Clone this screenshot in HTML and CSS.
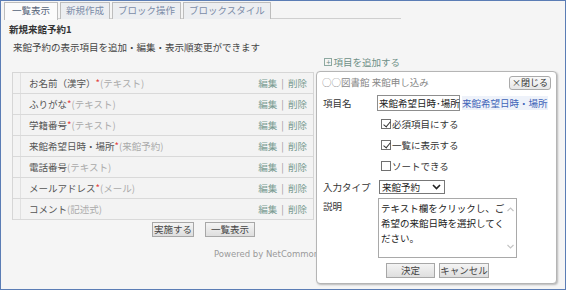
FILE: index.html
```html
<!DOCTYPE html>
<html lang="ja">
<head>
<meta charset="utf-8">
<link rel="stylesheet" href="styles.css">
</head>
<body>
<div class="frame">
  <div class="main">
    <div class="tabs">
      <div class="tab active">一覧表示</div>
      <div class="tab">新規作成</div>
      <div class="tab">ブロック操作</div>
      <div class="tab">ブロックスタイル</div>
    </div>
    <div class="title">新規来館予約1</div>
    <div class="desc">来館予約の表示項目を追加・編集・表示順変更ができます</div>
    <div class="addline"><span class="add"><span class="plus">+</span>項目を追加する</span></div>
    <div class="list">
      <div class="row"><span class="handle"></span><span class="name">お名前（漢字）<span class="req">*</span><span class="type">(テキスト)</span></span><span class="ops">編集 <span class="sep">|</span> 削除</span></div>
      <div class="row"><span class="handle"></span><span class="name">ふりがな<span class="req">*</span><span class="type">(テキスト)</span></span><span class="ops">編集 <span class="sep">|</span> 削除</span></div>
      <div class="row"><span class="handle"></span><span class="name">学籍番号<span class="req">*</span><span class="type">(テキスト)</span></span><span class="ops">編集 <span class="sep">|</span> 削除</span></div>
      <div class="row"><span class="handle"></span><span class="name">来館希望日時・場所<span class="req">*</span><span class="type">(来館予約)</span></span><span class="ops">編集 <span class="sep">|</span> 削除</span></div>
      <div class="row"><span class="handle"></span><span class="name">電話番号<span class="type">(テキスト)</span></span><span class="ops">編集 <span class="sep">|</span> 削除</span></div>
      <div class="row"><span class="handle"></span><span class="name">メールアドレス<span class="req">*</span><span class="type">(メール)</span></span><span class="ops">編集 <span class="sep">|</span> 削除</span></div>
      <div class="row"><span class="handle"></span><span class="name">コメント<span class="type">(記述式)</span></span><span class="ops">編集 <span class="sep">|</span> 削除</span></div>
    </div>
    <div class="actions">
      <button class="btn w42">実施する</button>
      <button class="btn w50">一覧表示</button>
    </div>
    <div class="powered">Powered by NetCommons</div>
  </div>

  <div class="dialog">
    <div class="dhead">
      <span class="dtitle">○○図書館 来館申し込み</span>
      <span class="dots"></span>
      <button class="close">×閉じる</button>
    </div>
    <div class="drow">
      <span class="label">項目名</span>
      <span class="ctrl"><span class="input">来館希望日時･場所</span><span class="preview">来館希望日時・場所</span></span>
    </div>
    <div class="drow">
      <span class="label"></span>
      <span class="ctrl cb"><span class="box checked"></span>必須項目にする</span>
    </div>
    <div class="drow">
      <span class="label"></span>
      <span class="ctrl cb"><span class="box checked"></span>一覧に表示する</span>
    </div>
    <div class="drow">
      <span class="label"></span>
      <span class="ctrl cb"><span class="box"></span>ソートできる</span>
    </div>
    <div class="drow">
      <span class="label">入力タイプ</span>
      <span class="ctrl"><span class="select">来館予約<svg class="chev" width="9" height="6" viewBox="0 0 9 6"><path d="M1 1 L4.5 4.5 L8 1" fill="none" stroke="#222" stroke-width="1.6"/></svg></span></span>
    </div>
    <div class="drow tall">
      <span class="label">説明</span>
      <span class="ctrl"><span class="textarea"><span class="tatext">テキスト欄をクリックし、ご希望の来館日時を選択してください。</span><span class="sb"><svg width="9" height="52" viewBox="0 0 9 52"><path d="M1.5 9 L4.5 6 L7.5 9" fill="none" stroke="#c4c4c4" stroke-width="1.2"/><path d="M1.5 43 L4.5 46 L7.5 43" fill="none" stroke="#c4c4c4" stroke-width="1.2"/></svg></span></span></span>
    </div>
    <div class="dactions">
      <button class="btn w49">決定</button>
      <button class="btn w50">キャンセル</button>
    </div>
  </div>
</div>
</body>
</html>
```

FILE: styles.css
```css
* { box-sizing: border-box; }
body {
  margin: 0;
  font-family: "Noto Sans CJK JP", sans-serif;
  font-size: 9.5px;
  color: #444;
}
.frame {
  position: relative;
  width: 566px;
  height: 290px;
  border: 1px solid #5b7db5;
  background: #f5f5f5;
  overflow: hidden;
}
.main {
  width: 400px;
  padding: 1px 0 0 3px;
}
.tabs {
  display: flex;
  gap: 2px;
  height: 17px;
  border-bottom: 1px solid #cfcfcf;
}
.tab {
  height: 17px;
  line-height: 15px;
  padding: 0 5px;
  border: 1px solid #bdbdbd;
  border-bottom: none;
  background: #eceef1;
  color: #7b8ca8;
}
.tab.active {
  padding: 0 7px;
  background: #fbfbfb;
  color: #566479;
  height: 18px;
}
.title {
  margin: 3px 0 0 5px;
  font-weight: bold;
  line-height: 14px;
  color: #333;
}
.desc {
  margin: 4px 0 0 9px;
  line-height: 14px;
  color: #444;
}
.addline {
  display: flex;
  justify-content: flex-end;
  margin-top: 1px;
  line-height: 14px;
}
.add {
  color: #6d8f86;
  display: flex;
  align-items: center;
  padding-right: 1px;
}
.plus {
  display: inline-flex;
  width: 8px;
  height: 8px;
  border: 1px solid #8ea9a1;
  align-items: center;
  justify-content: center;
  font-size: 8px;
  line-height: 6px;
  margin-right: 1px;
  color: #6d8f86;
}
.list {
  margin: 3px 0 0 8px;
  width: 302px;
  border: 1px solid #d6d6d6;
  border-bottom: none;
  background: #f3f3f3;
}
.row {
  display: flex;
  align-items: center;
  height: 21px;
  border-bottom: 1px solid #d9d9d9;
}
.handle {
  align-self: stretch;
  width: 8px;
  background-image: radial-gradient(circle, #9a9a9a 0.6px, transparent 0.7px);
  background-size: 2px 2px;
  border-right: 1px solid #e0e0e0;
}
.name {
  flex: 1;
  padding-left: 8px;
  color: #555;
}
.req { color: #e23a3a; }
.type { color: #aaa; }
.ops {
  padding-right: 6px;
  color: #7a9c92;
}
.sep { color: #999; margin: 0 2px; }
.actions {
  display: flex;
  justify-content: center;
  gap: 11px;
  margin-top: 2px;
  padding-left: 2px;
}
.btn {
  font-family: "Noto Sans CJK JP", sans-serif;
  font-size: 9.5px;
  height: 15px;
  line-height: 13px;
  padding: 0;
  border: 1px solid #a7a7a7;
  background: linear-gradient(#f4f4f4, #dedede);
  color: #444;
  text-align: center;
}
.w42 { width: 42px; }
.w50 { width: 50px; }
.w49 { width: 49px; }
.powered {
  margin: 12px 0 0 210px;
  font-family: "DejaVu Sans", sans-serif;
  font-size: 8.5px;
  color: #9a9a9a;
  white-space: nowrap;
}
.dialog {
  position: absolute;
  left: 315px;
  top: 70px;
  width: 241px;
  height: 213px;
  background: #fff;
  border: 1px solid #b5b5b5;
  border-radius: 4px;
  box-shadow: 1px 1px 2px rgba(0,0,0,0.25);
  overflow: hidden;
}
.dhead {
  display: flex;
  align-items: center;
  height: 20px;
  padding: 0 5px 0 5px;
  color: #888;
}
.dots {
  flex: 1;
  height: 7px;
  margin: 1px 4px 0 3px;
  background-image: radial-gradient(circle, #a8a8a8 0.6px, transparent 0.7px);
  background-size: 2px 2px;
}
.close {
  font-family: "Noto Sans CJK JP", sans-serif;
  font-size: 9px;
  height: 14px;
  line-height: 12px;
  padding: 0 2px;
  border: 1px solid #aaa;
  border-radius: 3px;
  background: linear-gradient(#fafafa, #e6e6e6);
  color: #333;
  margin-top: 2px;
}
.drow {
  display: flex;
  align-items: center;
  height: 21px;
}
.drow.tall {
  height: 66px;
  align-items: flex-start;
}
.label {
  width: 60px;
  padding-left: 6px;
  color: #333;
}
.tall .label { padding-top: 2px; }
.ctrl {
  display: flex;
  align-items: center;
  white-space: nowrap;
  color: #333;
}
.input {
  width: 83px;
  height: 16px;
  line-height: 14px;
  border: 1px solid #8d8d8d;
  padding-left: 1px;
  color: #222;
  background: #fff;
}
.preview {
  margin-left: 2px;
  color: #3f64b8;
  background: #eef2fa;
  line-height: 14px;
}
.cb { padding-left: 4px; }
.box {
  width: 10px;
  height: 10px;
  border: 1px solid #707070;
  margin-right: 1px;
  position: relative;
  background: #fff;
}
.box.checked::after {
  content: "";
  position: absolute;
  left: 2.5px;
  top: 0px;
  width: 3px;
  height: 6px;
  border: solid #333;
  border-width: 0 1.4px 1.4px 0;
  transform: rotate(40deg);
}
.select {
  display: flex;
  align-items: center;
  justify-content: space-between;
  margin-left: 2px;
  width: 66px;
  height: 14px;
  border: 1px solid #777;
  padding: 0 3px 0 2px;
  color: #222;
  background: #fff;
  line-height: 12px;
}
.textarea {
  display: flex;
  margin-top: 1px;
  margin-left: 1px;
  width: 139px;
  height: 60px;
  border: 1px solid #a9a9a9;
  background: #fff;
  white-space: normal;
}
.tatext {
  flex: 1;
  padding: 2px 0 0 2px;
  line-height: 15px;
  color: #222;
}
.sb {
  width: 10px;
  padding-top: 3px;
}
.dactions {
  display: flex;
  justify-content: center;
  gap: 4px;
  margin-top: 0;
  padding-left: 2px;
}
```
